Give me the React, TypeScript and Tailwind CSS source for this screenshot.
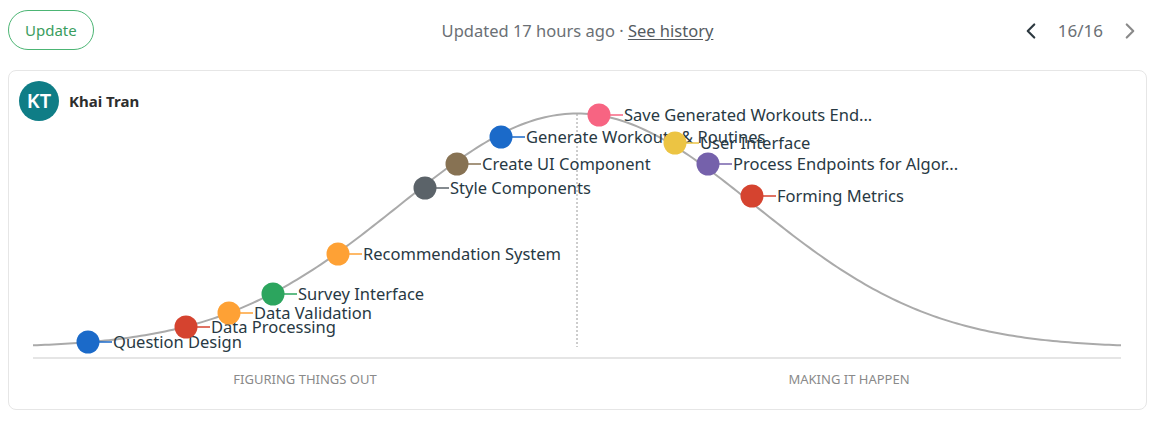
import { ChevronLeft, ChevronRight } from 'lucide-react';

const font = { fontFamily: '"Noto Sans", "Open Sans", sans-serif' };

// hill curve, page coordinates (svg viewBox matches the card's inner box)
const BASE = 347.5;
const PEAK = 234;
const MID = 577;
const SPREAD = 178;

function hillY(x: number) {
  const d = (x - MID) / SPREAD;
  return BASE - PEAK * Math.exp(-(d * d) / 2);
}

function hillPath() {
  const pts: string[] = [];
  for (let x = 33; x <= 1121; x += 4) {
    pts.push(`${x},${hillY(x).toFixed(2)}`);
  }
  return 'M' + pts.join(' L');
}

const scopes = [
  { x: 88, y: 342, color: '#1b6ac9', label: 'Question Design' },
  { x: 186, y: 327, color: '#d5432f', label: 'Data Processing' },
  { x: 229, y: 313, color: '#fea135', label: 'Data Validation' },
  { x: 273, y: 294, color: '#2ca55e', label: 'Survey Interface' },
  { x: 338, y: 254, color: '#fea135', label: 'Recommendation System' },
  { x: 425, y: 188, color: '#5b6369', label: 'Style Components' },
  { x: 457, y: 164, color: '#877253', label: 'Create UI Component' },
  { x: 501, y: 137, color: '#1b6ac9', label: 'Generate Workouts & Routines' },
  { x: 599, y: 115, color: '#f76482', label: 'Save Generated Workouts End...' },
  { x: 675, y: 143, color: '#ecc443', label: 'User Interface' },
  { x: 708, y: 164, color: '#7561ab', label: 'Process Endpoints for Algor...' },
  { x: 752, y: 196, color: '#d5432f', label: 'Forming Metrics' },
];

function HillChart() {
  return (
    <svg className="block w-full h-[290px]" viewBox="9 71 1137 290">
      <line x1="33" y1="358" x2="1121" y2="358" stroke="#dddddd" strokeWidth="1.5" />
      <line x1={MID} y1="114" x2={MID} y2="347" stroke="#9a9a9a" strokeWidth="1" strokeDasharray="2 2" />
      <path d={hillPath()} fill="none" stroke="#aaaaaa" strokeWidth="2" />
      {scopes.map((s) => (
        <g key={s.label}>
          <line x1={s.x} y1={s.y} x2={s.x + 24} y2={s.y} stroke={s.color} strokeOpacity="0.75" strokeWidth="2" />
          <circle cx={s.x} cy={s.y} r="11.5" fill={s.color} />
          <text
            x={s.x + 25}
            y={s.y - 0.5}
            dominantBaseline="central"
            fontSize="16.5"
            fill="#283943"
            style={font}
          >
            {s.label}
          </text>
        </g>
      ))}
    </svg>
  );
}

export default function App() {
  return (
    <div className="bg-white w-[1153px] h-[421px] pl-2 pr-[6px] pt-[10px]" style={font}>
      {/* top bar */}
      <div className="grid grid-cols-[1fr_auto_1fr] items-center h-10">
        <div>
          <button className="h-10 px-4 rounded-full border border-[#4cb574] text-[#3a9d5d] text-[15px]">
            Update
          </button>
        </div>
        <div className="text-[16.5px] text-[#6b7075] pt-[2px]">
          Updated 17 hours ago ·{' '}
          <a className="underline underline-offset-2 text-[#555b60]">See history</a>
        </div>
        <div className="flex items-center justify-end gap-[14px] pr-1 pt-[2px]">
          <ChevronLeft className="w-[26px] h-[26px] text-[#2d3940]" strokeWidth={2} />
          <span className="text-[17px] text-[#6b7075]">16/16</span>
          <ChevronRight className="w-[26px] h-[26px] text-[#8a8a8a]" strokeWidth={2} />
        </div>
      </div>

      {/* hill card */}
      <div className="relative mt-5 border border-[#e6e6e6] rounded-lg">
        <div className="absolute top-[10px] left-[10px] flex items-center gap-[10px]">
          <div className="w-10 h-10 rounded-full bg-[#0f7d86] text-white flex items-center justify-center text-[20px] font-semibold">
            KT
          </div>
          <span className="text-[15px] font-bold text-[#2d2d2d]">Khai Tran</span>
        </div>
        <HillChart />
        <div className="grid grid-cols-2 ml-6 mr-[25px] mt-[10px] pb-[22px] text-[13px] leading-4 text-[#8a8a8a] uppercase text-center">
          <span>Figuring things out</span>
          <span>Making it happen</span>
        </div>
      </div>
    </div>
  );
}
